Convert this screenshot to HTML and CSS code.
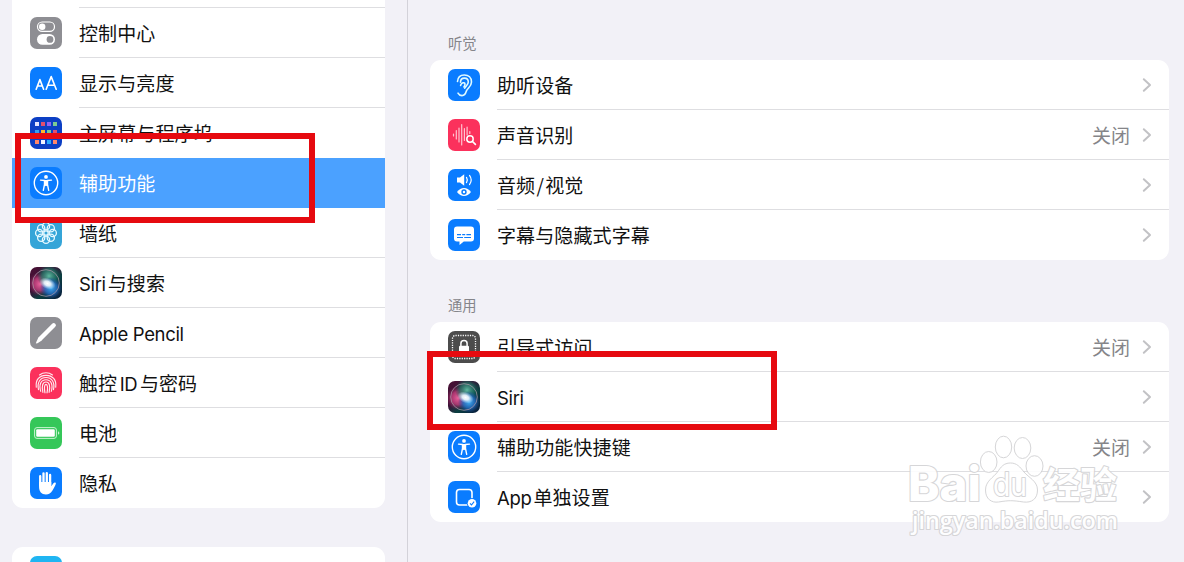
FILE: index.html
```html
<!DOCTYPE html>
<html lang="zh-CN">
<head>
<meta charset="utf-8">
<title>设置</title>
<link rel="stylesheet" href="styles.css">
</head>
<body>
<svg class="defs" width="0" height="0">
  <defs>
    <linearGradient id="siri-bg" x1="0" y1="0" x2="1" y2="1"><stop offset="0" stop-color="#4a1034"/><stop offset=".4" stop-color="#3a1236"/><stop offset=".62" stop-color="#0b3f40"/><stop offset="1" stop-color="#081a3c"/></linearGradient>
    <radialGradient id="siri-pink"><stop offset="0" stop-color="#e8629c"/><stop offset=".55" stop-color="#cc4080" stop-opacity=".75"/><stop offset="1" stop-color="#8a1e55" stop-opacity="0"/></radialGradient>
    <radialGradient id="siri-blue"><stop offset="0" stop-color="#45b0f5"/><stop offset=".55" stop-color="#2670c8" stop-opacity=".8"/><stop offset="1" stop-color="#1b3f9c" stop-opacity="0"/></radialGradient>
    <radialGradient id="siri-green"><stop offset="0" stop-color="#5fb8a0"/><stop offset=".6" stop-color="#1c7c68" stop-opacity=".7"/><stop offset="1" stop-color="#07564a" stop-opacity="0"/></radialGradient>
    <radialGradient id="siri-core"><stop offset="0" stop-color="#fff"/><stop offset=".4" stop-color="#f2faff" stop-opacity=".9"/><stop offset="1" stop-color="#c9e6ff" stop-opacity="0"/></radialGradient>
    <symbol id="siri" viewBox="0 0 32 32">
      <rect width="32" height="32" fill="url(#siri-bg)"/>
      <circle cx="10" cy="17" r="12" fill="url(#siri-pink)"/>
      <circle cx="19" cy="9" r="12" fill="url(#siri-green)"/>
      <circle cx="21" cy="21" r="11" fill="url(#siri-blue)"/>
      <ellipse cx="17.500" cy="16.500" rx="8.500" ry="5.500" transform="rotate(22 17.500 16.500)" fill="url(#siri-core)"/>
      <circle cx="16" cy="16" r="13.300" fill="none" stroke="#a99aa8" stroke-opacity=".75" stroke-width="1"/>
    </symbol>
    <symbol id="access" viewBox="0 0 32 32">
      <circle cx="16" cy="16" r="11.700" fill="none" stroke="#fff" stroke-width="1.400"/>
      <circle cx="16" cy="9.900" r="1.900" fill="#fff"/>
      <path d="M10.500 13.100 14.500 13.500v4l-1.200 5.800M21.500 13.100 17.500 13.500v4l1.200 5.800" fill="none" stroke="#fff" stroke-width="1.400" stroke-linecap="round" stroke-linejoin="round"/>
      <path d="M14 12.900h4v5.200l-.7.300L16 19.300l-1.300-.9-.7-.3z" fill="#fff"/>
    </symbol>
    <symbol id="chevron" viewBox="0 0 10 16"><path d="m1.800 2.200 6.200 5.800-6.200 5.800" fill="none" stroke="#c2c2c5" stroke-width="2" stroke-linecap="round" stroke-linejoin="round"/></symbol>
  </defs>
</svg>
<div class="screen">
  <nav class="sidebar">
    <ul class="card card-main">
      <li class="row"></li>
      <li class="row">
        <svg class="icon gray" viewBox="0 0 32 32"><rect x="7.500" y="5" width="17" height="9.400" rx="4.700" fill="none" stroke="#fff" stroke-width="1.200"/><circle cx="12.200" cy="9.700" r="3.200" fill="#fff"/><rect x="7" y="17" width="18" height="10.800" rx="5.400" fill="#fff"/><circle cx="20" cy="22.400" r="3.400" fill="#8e8e93"/></svg>
        <span class="label">控制中心</span>
      </li>
      <li class="row">
        <svg class="icon blue" viewBox="0 0 32 32"><g fill="none" stroke="#fff" stroke-width="1.600" stroke-linecap="round" stroke-linejoin="round"><path d="m6.200 22.200 3.700-9.600 3.700 9.600M7.500 19h4.900"/><path d="m16.200 22.200 5-12.600 5 12.600M17.900 18.200h6.600"/></g></svg>
        <span class="label">显示与亮度</span>
      </li>
      <li class="row no-line">
        <svg class="icon navy" viewBox="0 0 32 32"><path fill="#e4e6ff" d="M5 5h4v4H5z"/><path fill="#f1f2ff" d="M11 23h4v4h-4z"/><path fill="#e0506f" d="M11 5h4v4h-4zM23 13h4v4h-4z"/><path fill="#8f62f5" d="M17 5h4v4h-4z"/><path fill="#35a0f0" d="M5 13h4v4H5z"/><path fill="#7ccb93" d="M23 5h4v4h-4zM17 13h4v4h-4z"/><path fill="#ffb62e" d="M11 13h4v4h-4z"/><path fill="#ff8669" d="M5 23h4v4H5zM23 23h4v4h-4z"/><path fill="#27aaff" d="M17 23h4v4h-4z"/></svg>
        <span class="label">主屏幕与程序坞</span>
      </li>
      <li class="row selected no-line">
        <svg class="icon blue" viewBox="0 0 32 32"><use href="#access"/></svg>
        <span class="label">辅助功能</span>
      </li>
      <li class="row">
        <svg class="icon cyan" viewBox="0 0 32 32"><g fill="none" stroke="#e6f9ff" stroke-width="1.300"><circle cx="16" cy="16" r="2.200"/><circle cx="16" cy="9.200" r="3.600"/><circle cx="20.800" cy="11.200" r="3.600"/><circle cx="22.800" cy="16" r="3.600"/><circle cx="20.800" cy="20.800" r="3.600"/><circle cx="16" cy="22.800" r="3.600"/><circle cx="11.200" cy="20.800" r="3.600"/><circle cx="9.200" cy="16" r="3.600"/><circle cx="11.200" cy="11.200" r="3.600"/></g></svg>
        <span class="label">墙纸</span>
      </li>
      <li class="row">
        <svg class="icon" viewBox="0 0 32 32"><use href="#siri"/></svg>
        <span class="label"><span class="latin">Siri</span><span class="after-latin">与搜索</span></span>
      </li>
      <li class="row">
        <svg class="icon gray" viewBox="0 0 32 32"><path d="m10.500 21.500 13.200-13.200" stroke="#fff" stroke-width="4.400" stroke-linecap="round"/><path d="m8.500 20.200 3.300 3.300-4.300 2.700-1.600.4.400-1.600z" fill="#fff"/></svg>
        <span class="label"><span class="latin">Apple Pencil</span></span>
      </li>
      <li class="row">
        <svg class="icon red" viewBox="0 0 32 32"><g fill="none" stroke="#fff" stroke-opacity=".9" stroke-width="1.150" stroke-linecap="round"><path d="M9.500 8a10.500 10.500 0 0 1 13 0"/><path d="M6.300 20.200C5.300 12.800 9.500 8.300 16 8.300s10.700 4.500 9.700 11.900"/><path d="M8.500 22.600c-1.600-7.600 1.800-12.100 7.500-12.100s9.100 4.500 7.500 12.100"/><path d="M10.700 24.300C8.700 17.400 11 12.700 16 12.700s7.300 4.700 5.300 11.600"/><path d="M12.900 25.300C11.400 18.800 12.700 15 16 15s4.600 3.800 3.100 10.300"/><path d="M15 25.800c-1.100-5-.5-8.400 1-8.400s2.100 3.400 1 8.400"/></g></svg>
        <span class="label">触控<span class="latin id">ID</span>与密码</span>
      </li>
      <li class="row">
        <svg class="icon green" viewBox="0 0 32 32"><rect x="4.600" y="10.600" width="21.800" height="10.800" rx="2.400" fill="none" stroke="#c8f5d1" stroke-width="1"/><rect x="6.200" y="12.200" width="18.600" height="7.600" rx="1.200" fill="#fff"/><path d="M28 14.200c1.800.7 1.800 2.900 0 3.600z" fill="#c8f5d1"/></svg>
        <span class="label">电池</span>
      </li>
      <li class="row no-line">
        <svg class="icon blue" viewBox="0 0 32 32"><g stroke="#fff" stroke-width="2.300" stroke-linecap="round" fill="none"><path d="M10.200 9.200v9M13.500 6.300v11M16.800 6.100v11M20.100 8v10"/></g><path d="M9.050 15h12.200v4.200l2.400-3.100c.8-1 2.500-.5 2.200.7-.7 2-2.300 5-3.400 6.700-1.600 2.600-3.600 4-6.500 4-4.500 0-6.900-3-6.900-7.500z" fill="#fff"/></svg>
        <span class="label">隐私</span>
      </li>
    </ul>
    <ul class="card">
      <li class="row next-row"><svg class="icon store" viewBox="0 0 32 32"></svg></li>
    </ul>
  </nav>
  <main class="detail">
    <h2 class="heading">听觉</h2>
    <ul class="card">
      <li class="row">
        <svg class="icon blue" viewBox="0 0 32 32"><g fill="none" stroke="#dffaff" stroke-width="1.600" stroke-linecap="round" stroke-linejoin="round"><path d="M9.500 12.500c.3-4 3-6.500 6.800-6.500 4.300 0 7.200 2.800 7.200 6.900 0 4.800-4.300 6.300-5.300 9.700-.7 2.400-1.800 4-4.200 4-1.900 0-3.200-.9-4-2.400"/><path d="M12.500 13.300c0-2.500 1.500-4.200 3.900-4.200s3.900 1.600 3.900 3.900c0 2.800-2.500 4-3.600 6.200"/><path d="M12.600 16.500c.3-2 1.600-3 3.500-2.600 1.200.3 1.300 2.300-.2 4.100"/></g></svg>
        <span class="label">助听设备</span>
        <svg class="chevron" viewBox="0 0 10 16"><use href="#chevron"/></svg>
      </li>
      <li class="row">
        <svg class="icon red" viewBox="0 0 32 32"><g fill="none" stroke="#ffc4cf" stroke-width="1.200" stroke-linecap="round"><path d="M5.500 15v2M8.300 11.500v8.500M11 9v14M13.700 5.500v20.500M16.400 9.500v12M19.100 8v8M21.800 12.500v2"/></g><circle cx="22" cy="20" r="3.200" fill="none" stroke="#fff" stroke-width="1.500"/><path d="m24.500 22.500 2.900 2.900" stroke="#fff" stroke-width="1.700" stroke-linecap="round"/></svg>
        <span class="label">声音识别</span><span class="value">关闭</span>
        <svg class="chevron" viewBox="0 0 10 16"><use href="#chevron"/></svg>
      </li>
      <li class="row">
        <svg class="icon blue" viewBox="0 0 32 32"><path d="M9 8.600h3l4.200-3.300v11.400L12 13.400H9z" fill="#fff"/><g fill="none" stroke="#fff" stroke-width="1.200" stroke-linecap="round"><path d="M18.500 8.400c1 1.600 1 3.600 0 5.200M21.500 6.400c2 2.700 2 6.500 0 9.200"/></g><path d="M9 23c4-5.200 10-5.200 14 0-4 5.200-10 5.200-14 0z" fill="#fff"/><circle cx="16" cy="23" r="2.700" fill="#0a7cff"/><circle cx="16" cy="23" r="1.200" fill="#fff"/></svg>
        <span class="label">音频<span class="slash">/</span>视觉</span>
        <svg class="chevron" viewBox="0 0 10 16"><use href="#chevron"/></svg>
      </li>
      <li class="row no-line">
        <svg class="icon blue" viewBox="0 0 32 32"><path d="M9 7.500h14a3 3 0 0 1 3 3v9a3 3 0 0 1-3 3h-7.200L11.500 26v-3.500H9a3 3 0 0 1-3-3v-9a3 3 0 0 1 3-3z" fill="#fff"/><path d="M9 15.700h4M14.200 15.700h3M18.400 15.700h4.600M9 18.500h6M16.200 18.500H23" stroke="#0a7cff" stroke-width="1.200"/></svg>
        <span class="label">字幕与隐藏式字幕</span>
        <svg class="chevron" viewBox="0 0 10 16"><use href="#chevron"/></svg>
      </li>
    </ul>
    <h2 class="heading heading-general">通用</h2>
    <ul class="card">
      <li class="row">
        <svg class="icon dark" viewBox="0 0 32 32"><rect x="4.500" y="4.500" width="23" height="23" rx="3" fill="none" stroke="#fff" stroke-width="1.300" stroke-dasharray="1.200 1.200"/><rect x="11" y="14.700" width="10" height="8" rx="1.200" fill="#fff"/><path d="M12.900 15v-2.600c0-4 6.200-4 6.200 0V15" fill="none" stroke="#fff" stroke-width="1.500"/></svg>
        <span class="label">引导式访问</span><span class="value">关闭</span>
        <svg class="chevron" viewBox="0 0 10 16"><use href="#chevron"/></svg>
      </li>
      <li class="row">
        <svg class="icon" viewBox="0 0 32 32"><use href="#siri"/></svg>
        <span class="label"><span class="latin">Siri</span></span>
        <svg class="chevron" viewBox="0 0 10 16"><use href="#chevron"/></svg>
      </li>
      <li class="row">
        <svg class="icon blue" viewBox="0 0 32 32"><use href="#access"/></svg>
        <span class="label">辅助功能快捷键</span><span class="value">关闭</span>
        <svg class="chevron" viewBox="0 0 10 16"><use href="#chevron"/></svg>
      </li>
      <li class="row no-line">
        <svg class="icon blue" viewBox="0 0 32 32"><rect x="8.500" y="8.500" width="15.500" height="15.500" rx="3" fill="none" stroke="#fff" stroke-width="1.600"/><circle cx="24" cy="22.300" r="5.200" fill="#0a7cff"/><circle cx="24" cy="22.300" r="4.300" fill="#fff"/><path d="m22 22.400 1.500 1.600 2.600-3.400" fill="none" stroke="#0a7cff" stroke-width="1.100"/></svg>
        <span class="label"><span class="latin app">App</span>单独设置</span>
        <svg class="chevron" viewBox="0 0 10 16"><use href="#chevron"/></svg>
      </li>
    </ul>
  </main>
  <div class="marker marker-sidebar"></div>
  <div class="marker marker-siri"></div>
  <svg class="watermark" width="230" height="120" viewBox="0 0 230 120">
    <g class="mark">
      <text class="mark-bai" x="8" y="81" textLength="73" lengthAdjust="spacingAndGlyphs">Bai</text>
      <ellipse cx="88.700" cy="42" rx="8.300" ry="10.500"/>
      <ellipse cx="103.500" cy="27" rx="8.200" ry="10.800"/>
      <ellipse cx="122.500" cy="28" rx="8.300" ry="10.500"/>
      <ellipse cx="134.500" cy="46" rx="8.500" ry="10.300"/>
      <path d="M110.500 43c-7 0-9.500 4-13 9-4 5.500-12 9-12 18 0 9 6 13 13 12 5-.8 9-1.300 12-1.300s8 .5 13 1.300c8 1 14-3 14-12s-9-12.500-13.500-18c-4-5-7-9-13.500-9z"/>
      <text class="mark-du" x="93" y="76" textLength="34" lengthAdjust="spacingAndGlyphs">du</text>
      <text class="mark-cn" x="143" y="79" textLength="74" lengthAdjust="spacingAndGlyphs">经验</text>
      <text class="mark-url" x="12" y="109" textLength="206" lengthAdjust="spacingAndGlyphs">jingyan.baidu.com</text>
    </g>
  </svg>
</div>
</body>
</html>
```
FILE: styles.css
```css
* { box-sizing: border-box; }
body {
  margin: 0;
  background: #f2f1f7;
  color: #111;
  font-family: Inter, "Noto Sans CJK SC", sans-serif;
  overflow: hidden;
}
ul, h2 { margin: 0; padding: 0; list-style: none; }
.defs { display: block; height: 0; }
.screen {
  position: relative;
  display: grid;
  grid-template-columns: 408px 1fr;
  height: 562px;
  overflow: hidden;
}
.sidebar {
  border-right: 1px solid #d3d2d9;
  padding: 0 22px 0 12px;
  overflow: hidden;
  height: 562px;
}
.detail { padding: 33px 15px 0 22px; }
.card { background: #fff; border-radius: 11px; overflow: hidden; }
.card-main { margin-top: -42px; margin-bottom: 39px; }
.row {
  display: flex;
  align-items: center;
  height: 50px;
  padding: 0 17px 0 18px;
  background: linear-gradient(#dedee1, #dedee1) 67px 100% / 100% 1px no-repeat;
}
.no-line { background: none; }
.selected { background: #4ba1ff; color: #fff; }
.next-row { background: none; }
.icon { flex: none; width: 32px; height: 32px; border-radius: 7px; overflow: hidden; }
.label {
  margin-left: 17px;
  font-family: "Noto Sans CJK SC", sans-serif;
  font-size: 19px;
  line-height: 28px;
  letter-spacing: 0.12px;
  white-space: nowrap;
  flex: 1;
}
.latin { font-family: Inter, sans-serif; font-size: 18.5px; letter-spacing: -0.35px; }
.after-latin { margin-left: 2px; }
.id { margin: 0 2.5px; }
.app { margin-right: 2px; }
.slash { margin: 0 1.2px; }
.value { font-family: "Noto Sans CJK SC", sans-serif; font-size: 19px; line-height: 28px; color: #858589; }
.chevron { width: 10px; height: 16px; margin-left: 12px; flex: none; }
.gray { background: #8e8e93; }
.blue { background: #0a7cff; }
.navy { background: #0c3fc4; }
.cyan { background: #35a5d8; }
.red { background: #fb315c; }
.green { background: #35c759; }
.dark { background: #4c4c4c; }
.store { background: #20b5f2; }
.heading {
  height: 27px;
  padding-left: 18px;
  font: 400 14.3px/20px "Noto Sans CJK SC", sans-serif;
  color: #85858a;
}
.heading-general { margin-top: 35px; }
.marker { position: absolute; border: 6px solid #e60a10; }
.marker-sidebar { left: 15px; top: 133px; width: 300px; height: 90px; }
.marker-siri { left: 427px; top: 351px; width: 350px; height: 79px; }
.watermark { position: absolute; left: 900px; top: 420px; overflow: visible; }
.mark { fill: #fff; stroke: #d2d2d4; stroke-width: 1; opacity: .9; }
.mark text { paint-order: stroke; stroke-width: 2.2px; stroke-linejoin: round; }
.mark-bai { font: 800 48px Inter, sans-serif; }
.mark-du { font: 400 32px Inter, sans-serif; }
.mark-cn { font: 700 37px "Noto Sans CJK SC", sans-serif; }
.mark-url { font: 600 23px "Open Sans", sans-serif; }
```
